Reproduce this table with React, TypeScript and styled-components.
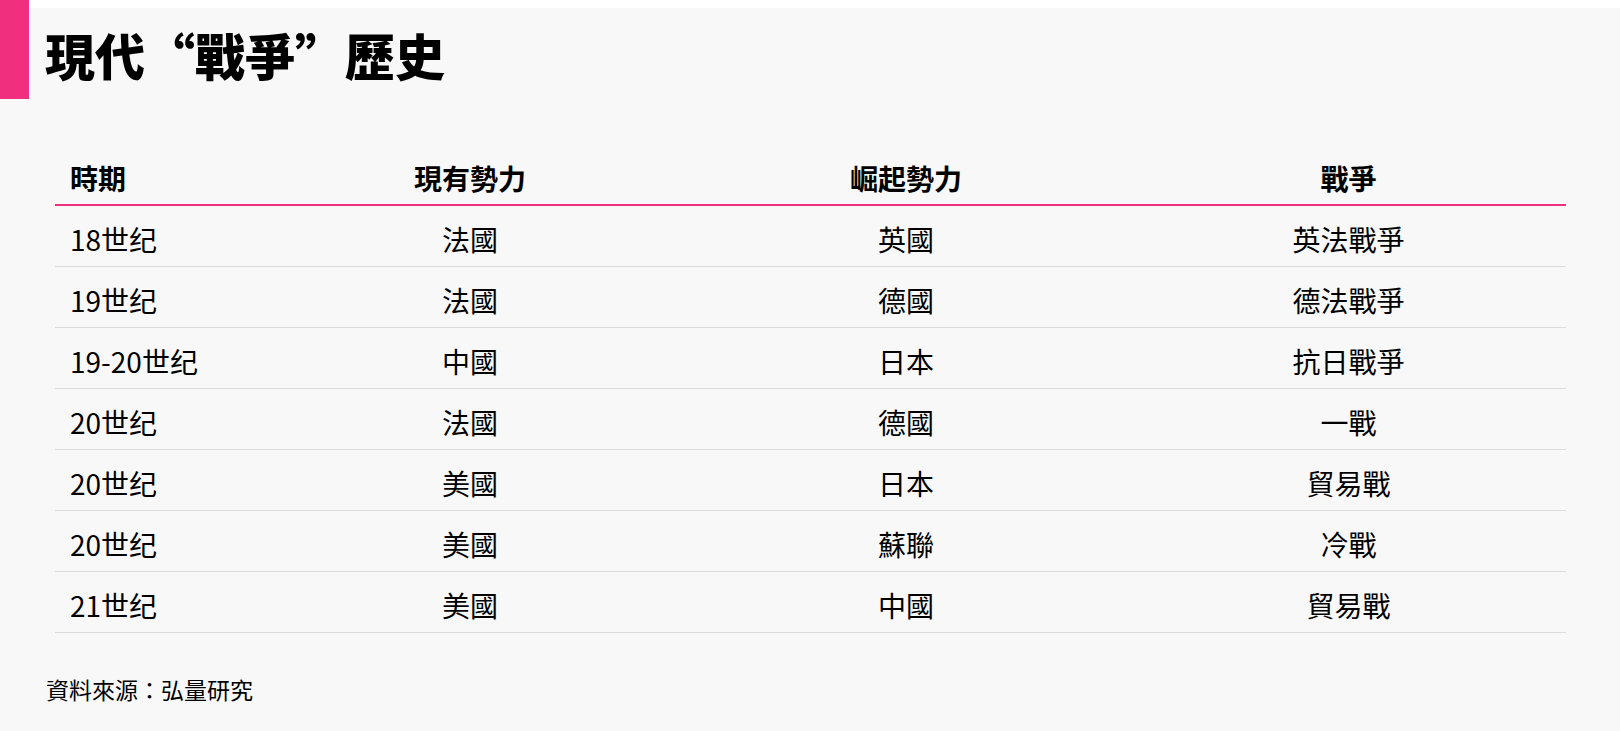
import React from "react";
import styled, { createGlobalStyle } from "styled-components";

const GlobalStyle = createGlobalStyle`
  html, body {
    margin: 0;
    padding: 0;
    background: #ffffff;
  }
  body {
    font-family: "Noto Sans CJK TC", "Noto Sans CJK SC", "Noto Sans", sans-serif;
    color: #000;
  }
`;

const Panel = styled.main`
  margin-top: 8px;
  min-height: 723px;
  background: #f8f8f8;
  box-sizing: border-box;
  padding-bottom: 20px;
`;

const TitleRow = styled.header`
  display: flex;
  align-items: center;
  height: 91px;
`;

const Accent = styled.div`
  align-self: flex-start;
  width: 29px;
  height: 99px;
  margin-top: -8px;
  background: #f0307e;
  flex-shrink: 0;
`;

const Title = styled.h1`
  margin: 0 0 0 16px;
  font-size: 50px;
  font-weight: 900;
  line-height: 1;
  letter-spacing: 0;
`;

const Quote = styled.span`
  font-feature-settings: "fwid" 1;
`;

const Table = styled.section`
  margin: 55px 54px 0 55px;
`;

const Grid = styled.div<{ $head?: boolean }>`
  display: grid;
  grid-template-columns: 204px 422px 450px 1fr;
  align-items: center;
  height: ${(p) => (p.$head ? "50px" : "60px")};
  border-bottom: ${(p) => (p.$head ? "2px solid #f0307e" : "1px solid #dcdcdc")};
  font-size: 28px;
  font-weight: ${(p) => (p.$head ? 700 : 400)};
`;

const Cell = styled.div<{ $left?: boolean; $body?: boolean }>`
  text-align: ${(p) => (p.$left ? "left" : "center")};
  padding-left: ${(p) => (p.$left ? "15px" : "0")};
  padding-top: ${(p) => (p.$body ? "8px" : "0")};
  line-height: 1.2;
  white-space: nowrap;
`;

const Source = styled.p`
  margin: 40px 0 0 46px;
  font-size: 23px;
  line-height: 32px;
`;

const rows: [string, string, string, string][] = [
  ["18世纪", "法國", "英國", "英法戰爭"],
  ["19世纪", "法國", "德國", "德法戰爭"],
  ["19-20世纪", "中國", "日本", "抗日戰爭"],
  ["20世纪", "法國", "德國", "一戰"],
  ["20世纪", "美國", "日本", "貿易戰"],
  ["20世纪", "美國", "蘇聯", "冷戰"],
  ["21世纪", "美國", "中國", "貿易戰"],
];

export default function App() {
  return (
    <>
      <GlobalStyle />
      <Panel lang="zh-Hant">
        <TitleRow>
          <Accent />
          <Title>
            現代<Quote>“</Quote>戰爭<Quote>”</Quote>歷史
          </Title>
        </TitleRow>
        <Table>
          <Grid $head>
            <Cell $left>時期</Cell>
            <Cell>現有勢力</Cell>
            <Cell>崛起勢力</Cell>
            <Cell>戰爭</Cell>
          </Grid>
          {rows.map((r, i) => (
            <Grid key={i}>
              <Cell $left $body>{r[0]}</Cell>
              <Cell $body>{r[1]}</Cell>
              <Cell $body>{r[2]}</Cell>
              <Cell $body>{r[3]}</Cell>
            </Grid>
          ))}
        </Table>
        <Source>資料來源：弘量研究</Source>
      </Panel>
    </>
  );
}
